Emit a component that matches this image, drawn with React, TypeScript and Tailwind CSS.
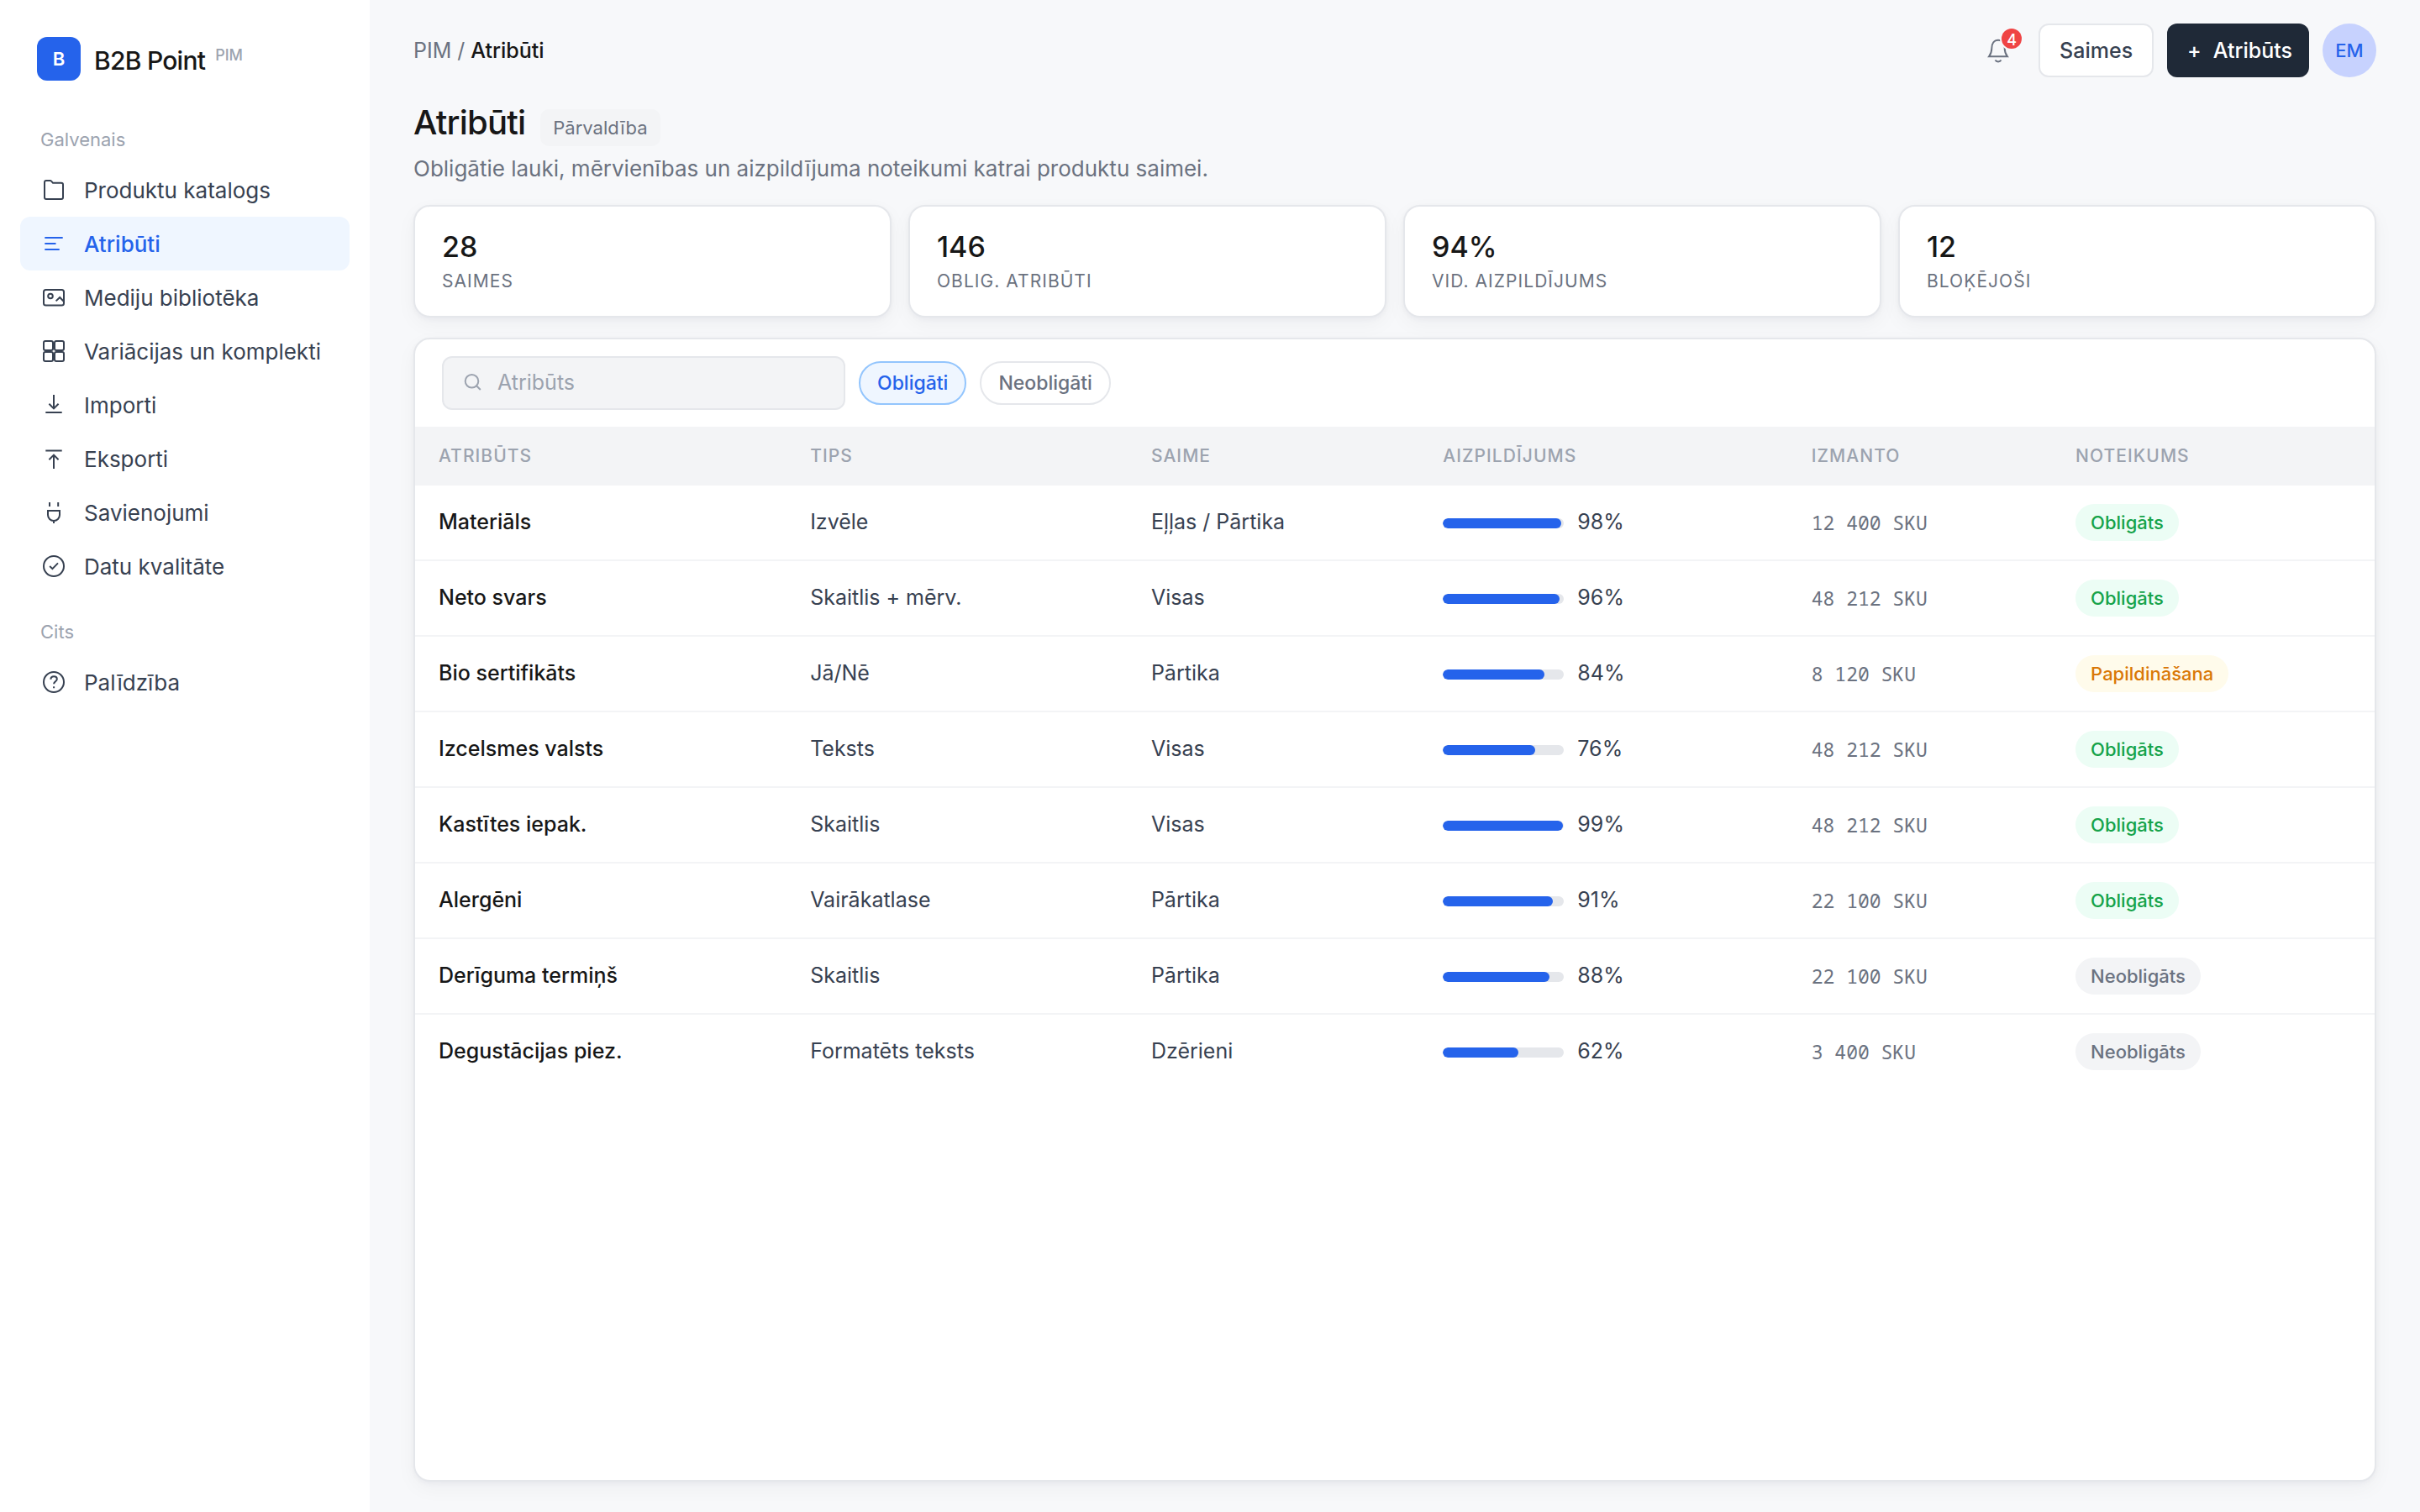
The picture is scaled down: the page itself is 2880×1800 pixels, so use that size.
import type { ReactNode } from "react";

type NavItem = { label: string; icon: ReactNode; active?: boolean };

function Icon({ children }: { children: ReactNode }) {
  return (
    <svg
      viewBox="0 0 32 32"
      className="size-8 shrink-0"
      fill="none"
      stroke="currentColor"
      strokeWidth="2"
      aria-hidden="true"
    >
      {children}
    </svg>
  );
}

const mainNav: NavItem[] = [
  {
    label: "Produktu katalogs",
    icon: (
      <Icon>
        <path d="M5 25V7a2 2 0 0 1 2-2h4.6a2 2 0 0 1 1.5.7L15 7.800h10a2 2 0 0 1 2 2V25a2 2 0 0 1-2 2H7a2 2 0 0 1-2-2Z" />
      </Icon>
    ),
  },
  {
    label: "Atribūti",
    active: true,
    icon: (
      <Icon>
        <path d="M5.3 9h21.4M5.3 16h13.2M5.3 23h17.4" />
      </Icon>
    ),
  },
  {
    label: "Mediju bibliotēka",
    icon: (
      <Icon>
        <rect x="4" y="7" width="24" height="18.5" rx="2.5" />
        <circle cx="12" cy="14.5" r="2.8" />
        <path d="m18.6 20.4 4.6-4.4 5 5.2" />
      </Icon>
    ),
  },
  {
    label: "Variācijas un komplekti",
    icon: (
      <Icon>
        <rect x="4" y="4" width="11" height="11" rx="2" />
        <rect x="17" y="4" width="11" height="11" rx="2" />
        <rect x="4" y="17" width="11" height="11" rx="2" />
        <rect x="17" y="17" width="11" height="11" rx="2" />
      </Icon>
    ),
  },
  {
    label: "Importi",
    icon: (
      <Icon>
        <path d="M16 4v16M10.4 14.8l5.6 5.6 5.6-5.6M6.3 25h19.4" />
      </Icon>
    ),
  },
  {
    label: "Eksporti",
    icon: (
      <Icon>
        <path d="M16 28V12M10.4 17.2l5.6-5.6 5.6 5.6M6.3 6.5h19.4" />
      </Icon>
    ),
  },
  {
    label: "Savienojumi",
    icon: (
      <Icon>
        <path d="M11 4v5M21.2 4v5M9 14h14v5a7 7 0 0 1-14 0ZM16 26v3" />
      </Icon>
    ),
  },
  {
    label: "Datu kvalitāte",
    icon: (
      <Icon>
        <circle cx="16" cy="16" r="12" />
        <path d="m11.2 16 3.2 3.2 6.6-6.8" />
      </Icon>
    ),
  },
];

const otherNav: NavItem[] = [
  {
    label: "Palīdzība",
    icon: (
      <Icon>
        <circle cx="16" cy="16" r="12" />
        <path d="M12.4 12.8c0-2.1 1.6-3.5 3.7-3.5s3.7 1.3 3.7 3.2c0 2.7-3.7 2.9-3.7 5.8M16.1 21.2v2" />
      </Icon>
    ),
  },
];

const stats = [
  { value: "28", label: "Saimes" },
  { value: "146", label: "Oblig. atribūti" },
  { value: "94%", label: "Vid. aizpildījums" },
  { value: "12", label: "Bloķējoši" },
];

const columns = [
  { title: "Atribūts", width: "w-[18.96%]" },
  { title: "Tips", width: "w-[17.4%]" },
  { title: "Saime", width: "w-[14.9%]" },
  { title: "Aizpildījums", width: "w-[18.8%]" },
  { title: "Izmanto", width: "w-[13.48%]" },
  { title: "Noteikums", width: "w-[16.46%]" },
];

const ruleStyles = {
  Obligāts: "bg-[#ecfdf5] text-[#16a34a]",
  Papildināšana: "bg-[#fffbeb] text-[#d97706]",
  Neobligāts: "bg-[#f3f4f6] text-[#6b7280]",
};

type Row = {
  name: string;
  type: string;
  family: string;
  fill: number;
  used: string;
  rule: keyof typeof ruleStyles;
};

const rows: Row[] = [
  { name: "Materiāls", type: "Izvēle", family: "Eļļas / Pārtika", fill: 98, used: "12 400 SKU", rule: "Obligāts" },
  { name: "Neto svars", type: "Skaitlis + mērv.", family: "Visas", fill: 96, used: "48 212 SKU", rule: "Obligāts" },
  { name: "Bio sertifikāts", type: "Jā/Nē", family: "Pārtika", fill: 84, used: "8 120 SKU", rule: "Papildināšana" },
  { name: "Izcelsmes valsts", type: "Teksts", family: "Visas", fill: 76, used: "48 212 SKU", rule: "Obligāts" },
  { name: "Kastītes iepak.", type: "Skaitlis", family: "Visas", fill: 99, used: "48 212 SKU", rule: "Obligāts" },
  { name: "Alergēni", type: "Vairākatlase", family: "Pārtika", fill: 91, used: "22 100 SKU", rule: "Obligāts" },
  { name: "Derīguma termiņš", type: "Skaitlis", family: "Pārtika", fill: 88, used: "22 100 SKU", rule: "Neobligāts" },
  { name: "Degustācijas piez.", type: "Formatēts teksts", family: "Dzērieni", fill: 62, used: "3 400 SKU", rule: "Neobligāts" },
];

function NavGroup({ title, items }: { title: string; items: NavItem[] }) {
  return (
    <div>
      <h2 className="px-6 pb-3 text-[22px] leading-8 text-[#9ca3af]">{title}</h2>
      <ul>
        {items.map((item) => (
          <li key={item.label}>
            <a
              href="#"
              aria-current={item.active ? "page" : undefined}
              className={
                item.active
                  ? "flex h-16 items-center gap-5 rounded-xl bg-[#eff6ff] px-6 text-[26px] font-medium text-[#2563eb]"
                  : "flex h-16 items-center gap-5 rounded-xl px-6 text-[26px] text-[#374151]"
              }
            >
              {item.icon}
              {item.label}
            </a>
          </li>
        ))}
      </ul>
    </div>
  );
}

function Sidebar() {
  return (
    <aside className="flex w-[440px] shrink-0 flex-col bg-white px-6 pt-11">
      <div className="mb-[54px] flex h-[52px] items-center gap-4 px-5">
        <div className="flex size-[52px] items-center justify-center rounded-xl bg-[#2563eb] text-[22px] font-semibold text-white">
          B
        </div>
        <div className="flex items-start gap-3 pt-1">
          <span className="text-[30px] leading-[52px] font-medium tracking-tight text-[#171717]">B2B Point</span>
          <span className="pt-2 text-[18px] leading-6 font-medium text-[#9ca3af]">PIM</span>
        </div>
      </div>
      <nav className="flex flex-col gap-[30px]">
        <NavGroup title="Galvenais" items={mainNav} />
        <NavGroup title="Cits" items={otherNav} />
      </nav>
    </aside>
  );
}

function TopBar() {
  return (
    <header className="flex items-center justify-between">
      <nav aria-label="Atrašanās vieta" className="pt-0.5 text-[25px] text-[#6b7280]">
        <a href="#">PIM</a> / <span className="font-medium text-[#171717]">Atribūti</span>
      </nav>
      <div className="flex items-center gap-4 text-[25px] font-medium">
        <button type="button" aria-label="Paziņojumi" className="relative flex size-16 items-center justify-center text-[#6b7280]">
          <Icon>
            <path d="M5 23.3h22c-2.2-3-3.3-5.6-3.3-9.6 0-6-3-10-7.7-10s-7.7 4-7.7 10c0 4-1.1 6.6-3.3 9.6Z" />
            <path d="M12.5 27.5c.8 1.3 2 1.9 3.5 1.9s2.7-.6 3.5-1.9" />
          </Icon>
          <span className="absolute top-1.5 right-1 flex size-6 items-center justify-center rounded-full bg-[#ef4444] pt-0.5 text-[18px] text-white ring-2 ring-[#f7f8fa]">
            4
          </span>
        </button>
        <button type="button" className="h-16 rounded-xl border-2 border-[#e5e7eb] bg-white px-[23px] pt-0.5 text-[#374151]">
          Saimes
        </button>
        <button type="button" className="flex h-16 items-center gap-3.5 rounded-xl bg-[#1f2937] pt-0.5 pr-5 pl-6 text-white">
          <span aria-hidden="true">+</span>
          Atribūts
        </button>
        <div className="flex size-16 items-center justify-center rounded-full bg-[#c7d2fe] text-[22px] text-[#2563eb]">EM</div>
      </div>
    </header>
  );
}

const cardClass =
  "rounded-[20px] border-2 border-[#e5e7eb] bg-white shadow-[0_2px_6px_rgba(16,24,40,0.04),0_8px_24px_rgba(16,24,40,0.04)]";

function StatCards() {
  return (
    <dl className="mt-[22px] grid grid-cols-4 gap-5">
      {stats.map((s) => (
        <div key={s.label} className={`${cardClass} flex flex-col-reverse px-8 py-6`}>
          <dt className="text-[21px] leading-[34px] tracking-[0.05em] text-[#6b7280] uppercase">{s.label}</dt>
          <dd className="text-[34px] leading-[48px] font-medium text-[#171717]">{s.value}</dd>
        </div>
      ))}
    </dl>
  );
}

function AttributeTable() {
  return (
    <table className="w-full table-fixed border-separate border-spacing-0 text-left text-[25px] text-[#374151]">
      <thead className="bg-[#f3f4f6] text-[21px] text-[#9ca3af]">
        <tr className="h-[70px]">
          {columns.map((c) => (
            <th key={c.title} scope="col" className={`${c.width} px-7 font-medium tracking-[0.05em] uppercase`}>
              {c.title}
            </th>
          ))}
        </tr>
      </thead>
      <tbody className="[&_td]:border-b-2 [&_td]:border-[#f3f4f6] [&_td]:px-7 [&>tr:last-child>td]:border-transparent">
        {rows.map((r) => (
          <tr key={r.name} className="h-[90px]">
            <td className="font-medium text-[#171717]">{r.name}</td>
            <td>{r.type}</td>
            <td>{r.family}</td>
            <td>
              <span className="mr-4 inline-block h-3 w-36 overflow-hidden rounded-full bg-[#e5e7eb] align-middle">
                <span className="block h-full rounded-full bg-[#2563eb]" style={{ width: `${r.fill}%` }} />
              </span>
              {r.fill}%
            </td>
            <td className="font-['Noto_Sans_Mono',monospace] text-[23px] text-[#6b7280]">{r.used}</td>
            <td>
              <span className={`${ruleStyles[r.rule]} inline-block rounded-full px-[18px] text-[22px] leading-[44px] font-medium`}>
                {r.rule}
              </span>
            </td>
          </tr>
        ))}
      </tbody>
    </table>
  );
}

export default function App() {
  return (
    <div className="flex min-h-screen bg-[#f7f8fa] font-['Inter',sans-serif]">
      <Sidebar />
      <main className="flex min-w-0 flex-1 flex-col px-[52px] pt-7 pb-9">
        <TopBar />
        <div className="mt-6 flex items-baseline gap-[18px]">
          <h1 className="text-[40px] leading-[60px] font-medium tracking-[-0.02em] text-[#171717]">Atribūti</h1>
          <span className="rounded-[10px] bg-[#f3f4f6] px-[15px] text-[22px] leading-[44px] text-[#6b7280]">Pārvaldība</span>
        </div>
        <p className="mt-1 text-[26px] leading-[42px] text-[#6b7280]">
          Obligātie lauki, mērvienības un aizpildījuma noteikumi katrai produktu saimei.
        </p>
        <StatCards />
        <section className={`${cardClass} mt-6 flex-1 overflow-hidden`}>
          <div className="flex items-center gap-4 px-8 py-5">
            <label className="flex h-16 w-[480px] items-center gap-4 rounded-xl border-2 border-[#e5e7eb] bg-[#f3f4f6] px-5 text-[#9ca3af]">
              <svg viewBox="0 0 28 28" className="size-7 shrink-0" fill="none" stroke="currentColor" strokeWidth="2" aria-hidden="true">
                <circle cx="13.5" cy="11.7" r="7.8" />
                <path d="m19 17.2 4.8 4.8" />
              </svg>
              <input
                type="text"
                aria-label="Meklēt atribūtu"
                placeholder="Atribūts"
                className="min-w-0 flex-1 bg-transparent text-[25px] outline-none placeholder:text-[#9ca3af]"
              />
            </label>
            <button
              type="button"
              aria-pressed="true"
              className="h-[52px] rounded-full border-2 border-[#93c5fd] bg-[#eff6ff] px-5 text-[23px] font-medium text-[#2563eb]"
            >
              Obligāti
            </button>
            <button
              type="button"
              aria-pressed="false"
              className="h-[52px] rounded-full border-2 border-[#e5e7eb] bg-white px-5 text-[23px] font-medium text-[#6b7280]"
            >
              Neobligāti
            </button>
          </div>
          <AttributeTable />
        </section>
      </main>
    </div>
  );
}
